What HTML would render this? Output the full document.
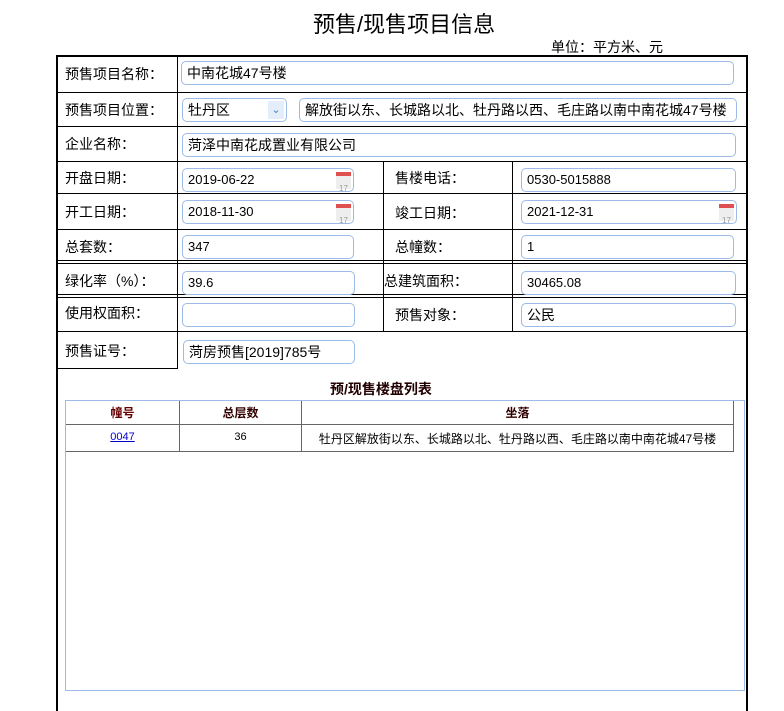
<!DOCTYPE html>
<html><head><meta charset="utf-8"><style>
*{margin:0;padding:0;box-sizing:border-box}
body{width:784px;height:711px;background:#fff;position:relative;overflow:hidden;font-family:"Liberation Sans","Noto Sans CJK SC",sans-serif;color:#000}
.a{position:absolute}
.h{position:absolute;height:1px;background:#000}
.v{position:absolute;width:1px;background:#000}
.lb{position:absolute;font-size:14px;line-height:16px}
.in{position:absolute;border:1px solid #9dbbe8;border-radius:5px;height:24px;font-size:13px;line-height:22px;padding-left:5px;background:#fff}
.cal{position:absolute;right:2px;top:3px;width:15px;height:17px;background:#eee;border-top:4px solid #e05050}
.cal:after{content:"17";position:absolute;left:3px;top:2px;font-size:8px;color:#999}
</style></head><body>
<div class="a" style="left:313px;top:10px;font-size:22px;line-height:30px">预售/现售项目信息</div>
<div class="a" style="left:551px;top:37px;font-size:14px">单位：平方米、元</div>
<!-- outer frame -->
<div class="h" style="left:56px;top:55px;width:692px;height:2px"></div>
<div class="v" style="left:56px;top:55px;height:656px;width:2px"></div>
<div class="v" style="left:746px;top:55px;height:656px;width:2px"></div>
<div class="h" style="left:56px;top:92px;width:692px"></div>
<div class="h" style="left:56px;top:126px;width:692px"></div>
<div class="h" style="left:56px;top:161px;width:692px"></div>
<div class="h" style="left:56px;top:193px;width:692px"></div>
<div class="h" style="left:56px;top:229px;width:692px"></div>
<div class="h" style="left:56px;top:260px;width:692px"></div>
<div class="h" style="left:56px;top:263px;width:692px"></div>
<div class="h" style="left:56px;top:294px;width:692px"></div>
<div class="h" style="left:56px;top:297px;width:692px"></div>
<div class="h" style="left:56px;top:331px;width:692px"></div>
<div class="h" style="left:56px;top:368px;width:122px"></div>
<div class="v" style="left:177px;top:56px;height:312px"></div>
<div class="v" style="left:383px;top:161px;height:170px"></div>
<div class="v" style="left:512px;top:161px;height:170px"></div>

<div class="lb" style="left:65px;top:66px">预售项目名称：</div>
<div class="in" style="left:181px;top:61px;width:553px;font-size:14px">中南花城47号楼</div>
<div class="lb" style="left:65px;top:102px">预售项目位置：</div>
<div class="in" style="left:182px;top:98px;width:105px;font-size:14px">牡丹区<span class="a" style="right:2px;top:2px;width:16px;height:18px;background:#e4eefa;color:#4a7fc0;font-size:11px;text-align:center;line-height:18px">&#8964;</span></div>
<div class="in" style="left:299px;top:98px;width:438px;font-size:14px">解放街以东、长城路以北、牡丹路以西、毛庄路以南中南花城47号楼</div>
<div class="lb" style="left:65px;top:136px">企业名称：</div>
<div class="in" style="left:182px;top:133px;width:554px;font-size:14px">菏泽中南花成置业有限公司</div>

<div class="lb" style="left:65px;top:170px">开盘日期：</div>
<div class="in" style="left:182px;top:168px;width:172px">2019-06-22<div class="cal"></div></div>
<div class="lb" style="left:395px;top:170px">售楼电话：</div>
<div class="in" style="left:521px;top:168px;width:215px">0530-5015888</div>

<div class="lb" style="left:65px;top:204px">开工日期：</div>
<div class="in" style="left:182px;top:200px;width:172px">2018-11-30<div class="cal"></div></div>
<div class="lb" style="left:395px;top:205px">竣工日期：</div>
<div class="in" style="left:521px;top:200px;width:216px">2021-12-31<div class="cal"></div></div>

<div class="lb" style="left:65px;top:239px">总套数：</div>
<div class="in" style="left:182px;top:235px;width:172px">347</div>
<div class="lb" style="left:395px;top:239px">总幢数：</div>
<div class="in" style="left:521px;top:235px;width:213px">1</div>

<div class="lb" style="left:65px;top:273px">绿化率（%）：</div>
<div class="in" style="left:182px;top:271px;width:173px">39.6</div>
<div class="lb" style="left:384px;top:273px">总建筑面积：</div>
<div class="in" style="left:521px;top:271px;width:215px">30465.08</div>

<div class="lb" style="left:65px;top:305px">使用权面积：</div>
<div class="in" style="left:182px;top:303px;width:173px"></div>
<div class="lb" style="left:395px;top:307px">预售对象：</div>
<div class="in" style="left:521px;top:303px;width:215px;font-size:14px">公民</div>

<div class="lb" style="left:65px;top:343px">预售证号：</div>
<div class="in" style="left:183px;top:340px;width:172px;font-size:14px">菏房预售[2019]785号</div>

<div class="a" style="left:330px;top:379px;font-size:14px;font-weight:bold;color:#200">预/现售楼盘列表</div>
<div class="a" style="left:65px;top:400px;width:680px;height:291px;border:1px solid #9dbbe8"></div>
<div class="h" style="left:66px;top:424px;width:668px;background:#666"></div>
<div class="h" style="left:66px;top:451px;width:668px;background:#666"></div>
<div class="v" style="left:179px;top:401px;height:51px;background:#666"></div>
<div class="v" style="left:301px;top:401px;height:51px;background:#666"></div>
<div class="v" style="left:733px;top:401px;height:51px;background:#666"></div>
<div class="a" style="left:66px;top:404px;width:113px;text-align:center;font-size:12px;font-weight:bold;color:#600">幢号</div>
<div class="a" style="left:180px;top:404px;width:121px;text-align:center;font-size:12px;font-weight:bold;color:#300">总层数</div>
<div class="a" style="left:302px;top:404px;width:431px;text-align:center;font-size:12px;font-weight:bold;color:#300">坐落</div>
<div class="a" style="left:66px;top:431px;width:113px;text-align:center;font-size:11px;color:#00c;text-decoration:underline">0047</div>
<div class="a" style="left:180px;top:431px;width:121px;text-align:center;font-size:11px">36</div>
<div class="a" style="left:302px;top:430px;width:431px;text-align:center;font-size:12px">牡丹区解放街以东、长城路以北、牡丹路以西、毛庄路以南中南花城47号楼</div>
</body></html>
